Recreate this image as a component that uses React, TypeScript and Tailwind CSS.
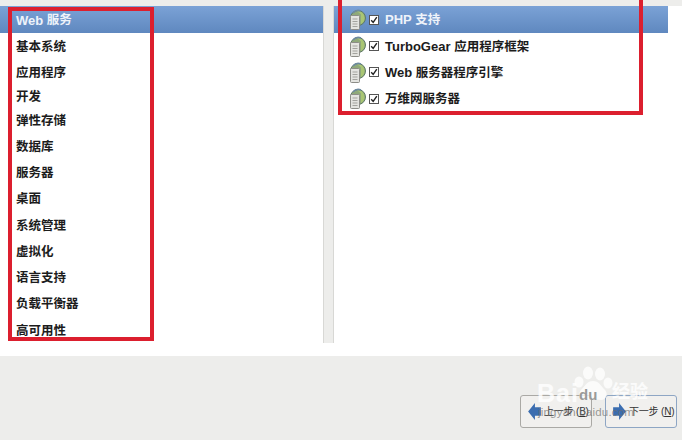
const groups = [
  { name: "基本系统", h: "h-[26px]" },
  { name: "应用程序", h: "h-[26px]" },
  { name: "开发", h: "h-[23px]" },
  { name: "弹性存储", h: "h-[25px]" },
  { name: "数据库", h: "h-[26px]" },
  { name: "服务器", h: "h-[26px]" },
  { name: "桌面", h: "h-[27px]" },
  { name: "系统管理", h: "h-[26px]" },
  { name: "虚拟化", h: "h-[26px]" },
  { name: "语言支持", h: "h-[26px]" },
  { name: "负载平衡器", h: "h-[27px]" },
  { name: "高可用性", h: "h-[26px]" },
];

const options = [
  { latin: "TurboGear", rest: "应用程序框架", h: "h-[26px]" },
  { latin: "Web", rest: "服务器程序引擎", h: "h-[26px]" },
  { latin: "", rest: "万维网服务器", h: "h-[27px]" },
];

function PackageIcon() {
  return (
    <svg width="17" height="21" viewBox="0 0 17 21" className="shrink-0">
      <circle cx="9" cy="9" r="7.5" fill="#8fa97a" stroke="#5f7a66" />
      <path d="M8 2a7 7 0 0 1 7.5 7c0 3-1.5 5-3.5 6V5.500z" fill="#a9c673" />
      <path d="M4 4a7 7 0 0 1 8-2" fill="none" stroke="#6d8aa0" strokeWidth="1.500" />
      <rect x="1.500" y="6.500" width="9" height="14" rx="1" fill="#e4e4e0" stroke="#8d8d88" />
      <path d="M3.500 10h5M3.500 12.500h5M3.500 15h5M3.500 17.500h5" stroke="#a3a39e" />
    </svg>
  );
}

function Check() {
  return (
    <span className="flex h-[10px] w-[10px] shrink-0 items-center justify-center border border-[#555] bg-white">
      <svg width="8" height="8" viewBox="0 0 8 8">
        <path d="M1.200 4.200 3.200 6.400 6.800 1.200" fill="none" stroke="#222" strokeWidth="1.400" />
      </svg>
    </span>
  );
}

function NavButton({ label, hotkey, next }: { label: string; hotkey: string; next?: boolean }) {
  return (
    <div className={`flex h-[33px] w-[72px] items-center rounded-[3px] border bg-[#f1f0ee] pl-[7px] ${next ? "border-[#8ea6c4]" : "border-[#aaa9a5]"}`}>
      <svg width="13" height="17" viewBox="0 0 15 20" className="shrink-0">
        {next ? <path d="M0 5h7V0l8 10-8 10v-5H0z" fill="#3b6db0" /> : <path d="M15 5H8V0L0 10l8 10v-5h7z" fill="#3b6db0" />}
      </svg>
      <span className="ml-[3px] whitespace-nowrap text-[10px] tracking-[-0.2px] text-[#333]">
        {label} (<span className="underline">{hotkey}</span>)
      </span>
    </div>
  );
}

export default function App() {
  return (
    <div className="relative h-[440px] w-[682px] overflow-hidden bg-white font-['Liberation_Sans','Noto_Sans_CJK_SC',sans-serif]">
      <div className="flex h-[356px] flex-col">
        <div className="h-[6px] bg-[#ededeb]" />
        <div className="flex h-[337px]">
          {/* Group list */}
          <div className="w-[324px] border-r border-[#d8d8d5]">
            <div className="flex h-[27px] items-center bg-gradient-to-b from-[#7ba2d6] to-[#5f88bf] pl-4 pt-[2px] text-[12.5px] font-bold text-[#eef3fa]">
              <span className="text-[13px]">Web</span>&nbsp;服务
            </div>
            {groups.map((g) => (
              <div key={g.name} className={`flex items-center pl-4 pt-[2px] text-[12.5px] font-bold text-[#1c1c1c] ${g.h}`}>
                {g.name}
              </div>
            ))}
          </div>
          <div className="w-[9px] bg-[#ededeb]" />
          {/* Options */}
          <div className="flex-1 border-l border-[#d8d8d5] pr-[14px]">
            <div className="flex h-[27px] items-center gap-[3px] bg-gradient-to-b from-[#7ba2d6] to-[#5f88bf] pl-[15px] text-[12.5px] font-bold text-[#eef3fa]">
              <PackageIcon />
              <Check />
              <span className="ml-[3px] pt-[1px]"><span className="text-[13px]">PHP</span>&nbsp;支持</span>
            </div>
            {options.map((o) => (
              <div key={o.rest} className={`flex items-center gap-[3px] pl-[15px] text-[12.5px] font-bold text-[#1c1c1c] ${o.h}`}>
                <PackageIcon />
                <Check />
                <span className="ml-[3px] pt-[1px]">
                  {o.latin && <span className="text-[13px]">{o.latin}&nbsp;</span>}
                  {o.rest}
                </span>
              </div>
            ))}
          </div>
        </div>
      </div>

      {/* Bottom bar */}
      <div className="flex h-[84px] items-start justify-end gap-[13px] bg-[#ededeb] pr-[5px] pt-[39px]">
        <NavButton label="上一步" hotkey="B" />
        <NavButton label="下一步" hotkey="N" next />
      </div>

      {/* Red annotation boxes */}
      <div className="absolute left-[8px] top-[7px] h-[334px] w-[146px] border-[4px] border-[#dc1f2e]" />
      <div className="absolute left-[338px] top-[-4px] h-[119px] w-[305px] border-[4px] border-[#dc1f2e]" />

      {/* Baidu watermark */}
      <svg width="46" height="46" viewBox="0 0 46 46" className="absolute left-[570px] top-[364px]" fill="#ffffff" fillOpacity="0.75">
        <ellipse cx="18" cy="9" rx="5" ry="6.500" />
        <ellipse cx="30" cy="10" rx="5" ry="6.500" />
        <ellipse cx="9" cy="18" rx="4.500" ry="5.500" />
        <ellipse cx="38" cy="19" rx="4.500" ry="5.500" />
        <path d="M23 17c6 0 8 5 12 9 3 3 2 10-4 10-3 0-5-1-8-1s-5 1-8 1c-6 0-7-7-4-10 4-4 6-9 12-9z" />
      </svg>
      <div className="absolute left-[537px] top-[381px] text-[25px] font-bold leading-none tracking-[1px] text-white/80">Bai</div>
      <div className="absolute left-[579px] top-[387px] text-[15px] font-bold leading-none text-[#9a9a98]">du</div>
      <div className="absolute left-[612px] top-[383px] text-[18px] font-bold leading-none text-white/80">经验</div>
      <div className="absolute left-[538px] top-[407px] text-[11.500px] leading-none tracking-[0.2px] text-[#6f6f6d]/70">jingyan.baidu.com</div>
    </div>
  );
}
